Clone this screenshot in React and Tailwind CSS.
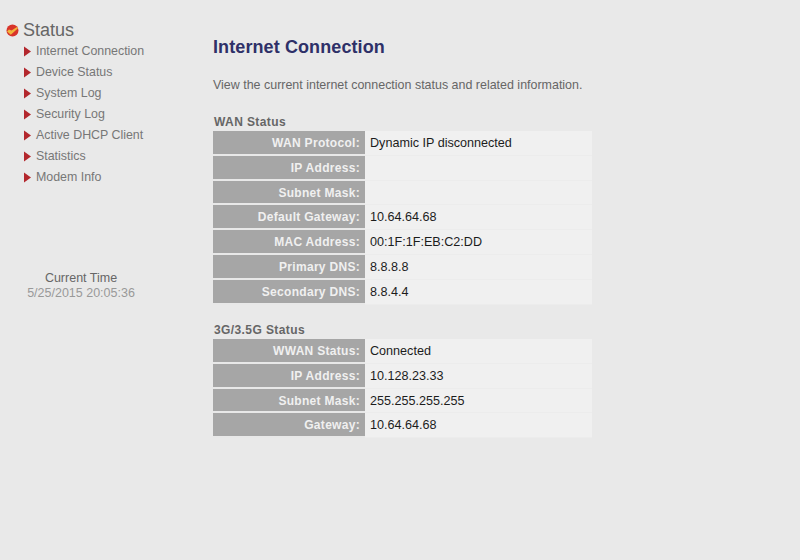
import React from 'react';

const menuItems = [
  'Internet Connection',
  'Device Status',
  'System Log',
  'Security Log',
  'Active DHCP Client',
  'Statistics',
  'Modem Info',
];

const wanRows = [
  ['WAN Protocol:', 'Dynamic IP disconnected'],
  ['IP Address:', ''],
  ['Subnet Mask:', ''],
  ['Default Gateway:', '10.64.64.68'],
  ['MAC Address:', '00:1F:1F:EB:C2:DD'],
  ['Primary DNS:', '8.8.8.8'],
  ['Secondary DNS:', '8.8.4.4'],
];

const wwanRows = [
  ['WWAN Status:', 'Connected'],
  ['IP Address:', '10.128.23.33'],
  ['Subnet Mask:', '255.255.255.255'],
  ['Gateway:', '10.64.64.68'],
];

function StatusIcon() {
  return (
    <svg width="13" height="13" viewBox="0 0 13 13" className="shrink-0">
      <circle cx="6.5" cy="6.5" r="6" fill="#d8342a" />
      <path d="M1 7.5 L4.8 10.8 L12 4.2 L11 3 L5.5 6.5 L3 5.5 Z" fill="#f2b53a" />
    </svg>
  );
}

function Arrow() {
  return (
    <svg width="8" height="11" viewBox="0 0 8 11" className="shrink-0">
      <path d="M0 0.5 L7 5.5 L0 10.5 Z" fill="#b3272d" />
    </svg>
  );
}

function StatusTable({ title, rows }) {
  return (
    <div>
      <h3 className="ml-[1px] h-[20px] text-[12px] leading-[22px] font-bold tracking-[0.4px] text-[#666666]">{title}</h3>
      <div className="flex w-[379px] flex-col">
        {rows.map(([label, value]) => (
          <div key={label} className="flex h-[24.8px]">
            <div className="w-[152px] border-b-2 border-[#e8e8e8] bg-[#a6a6a6] pr-[5px] text-right text-[12px] leading-[25px] font-bold tracking-[0.3px] text-[#f0f0f0]">
              {label}
            </div>
            <div className="flex-1 border-b border-[#ececec] bg-[#f0f0f0] pl-[5px] text-[12.6px] leading-[25px] text-[#1c1c1c]">
              {value}
            </div>
          </div>
        ))}
      </div>
    </div>
  );
}

export default function App() {
  return (
    <div className="flex h-[560px] w-[800px] overflow-hidden bg-[#e9e9e9] font-['Liberation_Sans',Arial,sans-serif]">
      <aside className="w-[213px] shrink-0 pt-[20px]">
        <div className="flex items-center gap-[4px] pl-[6px] text-[18px] leading-[20px] text-[#666666]">
          <StatusIcon />
          <span>Status</span>
        </div>
        <ul className="mt-[1px] pl-[24px]">
          {menuItems.map((item) => (
            <li key={item} className="flex h-[21px] items-center gap-[4px] text-[12.4px] text-[#777777]">
              <Arrow />
              <span>{item}</span>
            </li>
          ))}
        </ul>
        <div className="mt-[83px] w-[162px] text-center text-[12.5px] leading-[15px]">
          <div className="text-[#666666]">Current Time</div>
          <div className="text-[#999999]">5/25/2015 20:05:36</div>
        </div>
      </aside>
      <main className="flex-1 pt-[36px]">
        <h1 className="text-[18px] leading-[22px] font-bold tracking-[0.1px] text-[#2e3068]">Internet Connection</h1>
        <p className="mt-[19px] text-[12.46px] leading-[16px] text-[#666666]">
          View the current internet connection status and related information.
        </p>
        <div className="mt-[18px] flex flex-col gap-[14.4px]">
          <StatusTable title="WAN Status" rows={wanRows} />
          <StatusTable title="3G/3.5G Status" rows={wwanRows} />
        </div>
      </main>
    </div>
  );
}
